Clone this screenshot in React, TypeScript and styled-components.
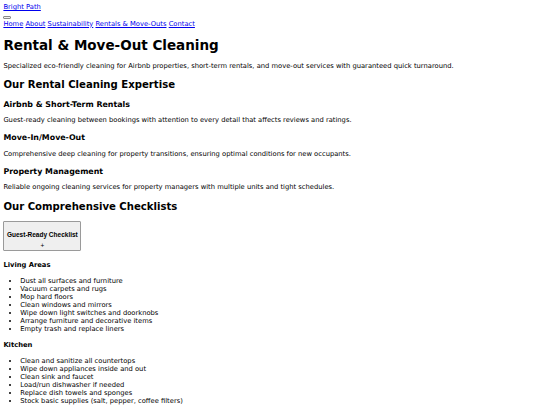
import React from 'react'
import styled, { createGlobalStyle } from 'styled-components'

const GlobalStyle = createGlobalStyle`
	html, body {
		background: #fff;
	}
	body {
		margin: 3.375px;
		font-family: 'DejaVu Sans', Verdana, sans-serif;
		font-size: 6.75px;
		line-height: 8px;
		color: #000;
	}
`

const checklists = [
	{
		title: 'Living Areas',
		items: [
			'Dust all surfaces and furniture',
			'Vacuum carpets and rugs',
			'Mop hard floors',
			'Clean windows and mirrors',
			'Wipe down light switches and doorknobs',
			'Arrange furniture and decorative items',
			'Empty trash and replace liners',
		],
	},
	{
		title: 'Kitchen',
		items: [
			'Clean and sanitize all countertops',
			'Wipe down appliances inside and out',
			'Clean sink and faucet',
			'Load/run dishwasher if needed',
			'Replace dish towels and sponges',
			'Stock basic supplies (salt, pepper, coffee filters)',
		],
	},
]

const services = [
	{
		title: 'Airbnb & Short-Term Rentals',
		text: 'Guest-ready cleaning between bookings with attention to every detail that affects reviews and ratings.',
	},
	{
		title: 'Move-In/Move-Out',
		text: 'Comprehensive deep cleaning for property transitions, ensuring optimal conditions for new occupants.',
	},
	{
		title: 'Property Management',
		text: 'Reliable ongoing cleaning services for property managers with multiple units and tight schedules.',
	},
]

const App = () => {
	return (
		<>
			<GlobalStyle />
			<Header>
				<Link href="#">Bright Path</Link>
			</Header>
			<Nav>
				<MenuRow>
					<MenuToggle type="button" aria-label="Menu" />
				</MenuRow>
				<div>
					<Link href="#">Home</Link> <Link href="#">About</Link>{' '}
					<Link href="#">Sustainability</Link>{' '}
					<Link href="#">Rentals &amp; Move-Outs</Link>{' '}
					<Link href="#">Contact</Link>
				</div>
			</Nav>
			<main>
				<Title>Rental &amp; Move-Out Cleaning</Title>
				<Text>
					Specialized eco-friendly cleaning for Airbnb properties, short-term
					rentals, and move-out services with guaranteed quick turnaround.
				</Text>

				<SectionTitle>Our Rental Cleaning Expertise</SectionTitle>
				{services.map((service) => (
					<div key={service.title}>
						<ServiceTitle>{service.title}</ServiceTitle>
						<ServiceText>{service.text}</ServiceText>
					</div>
				))}

				<SectionTitle>Our Comprehensive Checklists</SectionTitle>
				<ChecklistToggle type="button">
					<ToggleLabel>Guest-Ready Checklist</ToggleLabel>
					<ToggleIcon>+</ToggleIcon>
				</ChecklistToggle>
				{checklists.map((list) => (
					<div key={list.title}>
						<ListTitle>{list.title}</ListTitle>
						<List>
							{list.items.map((item) => (
								<li key={item}>{item}</li>
							))}
						</List>
					</div>
				))}
			</main>
		</>
	)
}

export default App

const Header = styled.header``

const Link = styled.a`
	color: #0000ee;
	text-decoration: underline;
`

const Nav = styled.nav``

const MenuRow = styled.div`
	padding: 4.6px 0 0.7px;
`

const MenuToggle = styled.button`
	display: block;
	width: 8px;
	height: 3px;
	padding: 0;
	background: #efefef;
	border: 0.5px solid #8a8a8a;
	border-radius: 1px;
`

const Title = styled.h1`
	font-size: 13.5px;
	line-height: 16px;
	font-weight: bold;
	margin: 9.6px 0 8.4px;
`

const Text = styled.p`
	margin: 6.75px 0;
`

const SectionTitle = styled.h2`
	font-size: 10.125px;
	line-height: 12px;
	font-weight: bold;
	margin: 9.3px 0 8.3px;
`

const ServiceTitle = styled.h3`
	font-size: 7.9px;
	line-height: 9.5px;
	font-weight: bold;
	margin: 8.6px 0 7.4px;
`

const ServiceText = styled.p`
	margin: 7.4px 0 8.3px;
`

const ChecklistToggle = styled.button`
	display: block;
	box-sizing: border-box;
	width: 78px;
	height: 30px;
	margin: 0 0 9.7px;
	padding: 8px 2px 0;
	background: #efefef;
	border: 1px solid #9a9a9a;
	border-radius: 1px;
	font-family: 'Liberation Sans', Arial, sans-serif;
	font-size: 6.5px;
	line-height: 7.5px;
	font-weight: bold;
	color: #000;
	text-align: center;
`

const ToggleLabel = styled.span`
	display: block;
`

const ToggleIcon = styled.span`
	display: block;
	margin-top: 3.9px;
	font-weight: normal;
`

const ListTitle = styled.h4`
	font-size: 6.75px;
	font-weight: bold;
	margin: 8.5px 0 8px;
`

const List = styled.ul`
	margin: 8px 0;
	padding-left: 16.9px;
	list-style: disc;
`
